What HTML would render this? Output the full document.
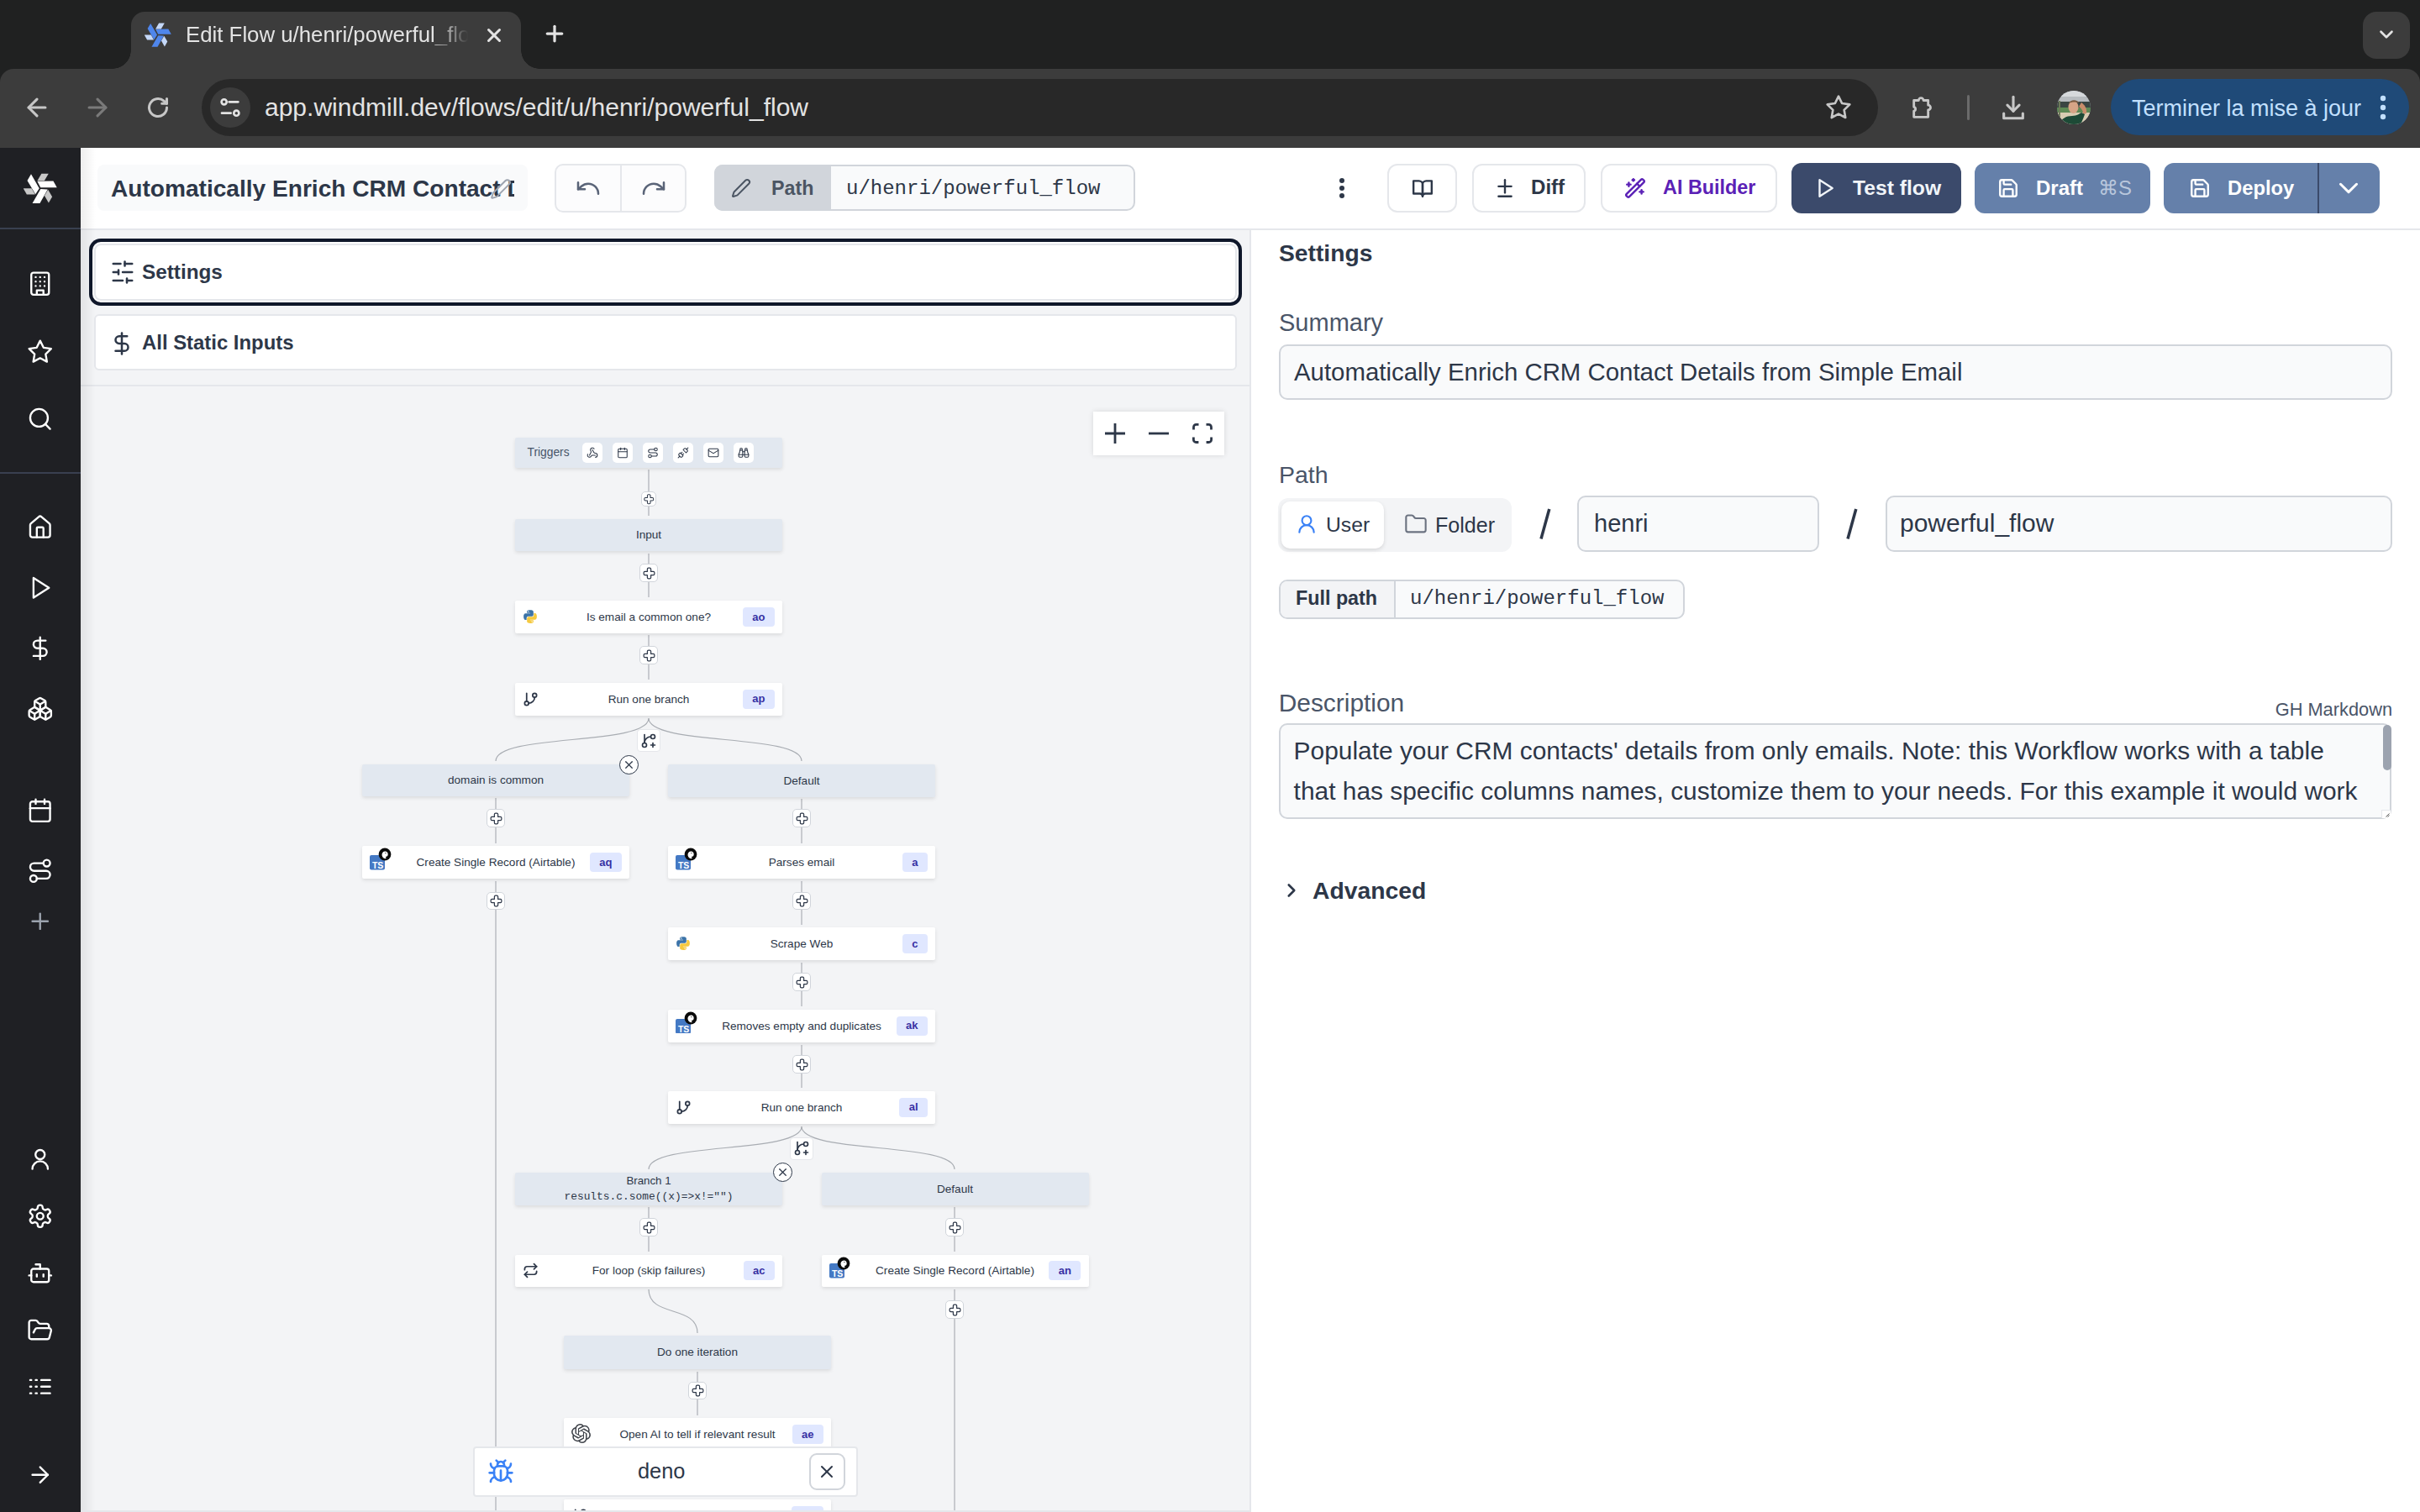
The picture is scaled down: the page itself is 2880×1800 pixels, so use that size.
<!DOCTYPE html><html><head><meta charset="utf-8"><style>html,body{margin:0;padding:0;width:2880px;height:1800px;overflow:hidden;background:#fff;position:relative}*{box-sizing:border-box}</style></head><body>
<div style="position:absolute;left:0px;top:0px;width:2880px;height:100px;background:#202121"></div>
<div style="position:absolute;left:156px;top:14px;width:464px;height:70px;background:#3c3c3c;border-radius:16px 16px 0 0"></div>
<div style="position:absolute;left:134px;top:60px;width:22px;height:22px;background:radial-gradient(circle at 0 0,#202121 21.5px,#3c3c3c 22px)"></div>
<div style="position:absolute;left:620px;top:60px;width:22px;height:22px;background:radial-gradient(circle at 100% 0,#202121 21.5px,#3c3c3c 22px)"></div>
<div style="position:absolute;left:0px;top:82px;width:2880px;height:94px;background:#3c3c3c;border-radius:16px 16px 0 0"></div>
<div style="position:absolute;left:156px;top:78px;width:464px;height:8px;background:#3c3c3c"></div>
<svg style="position:absolute;left:172px;top:27.3px;" width="32" height="29" viewBox="380 330 880 800"><g transform="rotate(0 815 730)"><polygon points="740,545 1160,540 1255,710 825,710" fill="#4f86ec"/><polygon points="850,345 1035,345 925,535 740,535" fill="#c5d8f8"/></g><g transform="rotate(120 815 730)"><polygon points="740,545 1160,540 1255,710 825,710" fill="#4f86ec"/><polygon points="850,345 1035,345 925,535 740,535" fill="#c5d8f8"/></g><g transform="rotate(240 815 730)"><polygon points="740,545 1160,540 1255,710 825,710" fill="#4f86ec"/><polygon points="850,345 1035,345 925,535 740,535" fill="#c5d8f8"/></g></svg>
<div style="position:absolute;left:221px;top:28.2px;width:336px;overflow:hidden;font-family:'Liberation Sans', sans-serif;font-size:25.8px;line-height:26px;color:#e3e3e3;white-space:nowrap;-webkit-mask-image:linear-gradient(90deg,#000 300px,transparent 336px)">Edit Flow u/henri/powerful_flow</div>
<svg style="position:absolute;left:575.0px;top:29.0px;" width="26" height="26" viewBox="0 0 24 24"><g fill="none" stroke="#e3e3e3" stroke-width="2.8" stroke-linecap="round" stroke-linejoin="round"><path d="M18 6 6 18"/><path d="m6 6 12 12"/></g></svg>
<svg style="position:absolute;left:645.0px;top:25.0px;" width="30" height="30" viewBox="0 0 24 24"><g fill="none" stroke="#e3e3e3" stroke-width="2.6" stroke-linecap="round" stroke-linejoin="round"><path d="M5 12h14"/><path d="M12 5v14"/></g></svg>
<div style="position:absolute;left:2812px;top:14px;width:56px;height:56px;background:#3c3c3c;border-radius:16px"></div>
<svg style="position:absolute;left:2827.0px;top:28.0px;" width="26" height="26" viewBox="0 0 24 24"><g fill="none" stroke="#e3e3e3" stroke-width="2.4" stroke-linecap="round" stroke-linejoin="round"><path d="m6 9 6 6 6-6"/></g></svg>
<svg style="position:absolute;left:27.0px;top:111.0px;" width="34" height="34" viewBox="0 0 24 24"><g fill="none" stroke="#c7c7c7" stroke-width="2.2" stroke-linecap="round" stroke-linejoin="round"><path d="M19 12H5"/><path d="m12 19-7-7 7-7"/></g></svg>
<svg style="position:absolute;left:99.0px;top:111.0px;" width="34" height="34" viewBox="0 0 24 24"><g fill="none" stroke="#7a7a7a" stroke-width="2.2" stroke-linecap="round" stroke-linejoin="round"><path d="M5 12h14"/><path d="m12 5 7 7-7 7"/></g></svg>
<svg style="position:absolute;left:174.0px;top:114.0px;" width="28" height="28" viewBox="0 0 24 24"><g fill="none" stroke="#c7c7c7" stroke-width="2.6" stroke-linecap="round" stroke-linejoin="round"><path d="M21 12a9 9 0 1 1-3-6.7L21 8"/><path d="M21 3v5h-5"/></g></svg>
<div style="position:absolute;left:240px;top:94px;width:1995px;height:68px;background:#282828;border-radius:34px"></div>
<div style="position:absolute;left:250px;top:104px;width:48px;height:48px;background:#3c3c3c;border-radius:24px"></div>
<svg style="position:absolute;left:258px;top:112px;" width="32" height="32" viewBox="0 0 24 24"><g fill="none" stroke="#e3e3e3" stroke-width="2" stroke-linecap="round"><circle cx="6.5" cy="7" r="2.3"/><path d="M11 7h8"/><circle cx="17.5" cy="17" r="2.3"/><path d="M4.5 17h8"/></g></svg>
<div style="position:absolute;left:315px;top:112.61px;font-family:'Liberation Sans', sans-serif;font-size:30px;line-height:30px;color:#e3e3e3;font-weight:400;white-space:nowrap;">app.windmill.dev/flows/edit/u/henri/powerful_flow</div>
<svg style="position:absolute;left:2172.0px;top:112.0px;" width="32" height="32" viewBox="0 0 24 24"><g fill="none" stroke="#c7c7c7" stroke-width="2" stroke-linecap="round" stroke-linejoin="round"><polygon points="12 2 15.09 8.26 22 9.27 17 14.14 18.18 21.02 12 17.77 5.82 21.02 7 14.14 2 9.27 8.91 8.26 12 2"/></g></svg>
<svg style="position:absolute;left:2272px;top:111px;" width="34" height="34" viewBox="0 0 24 24"><path fill="none" stroke="#c7c7c7" stroke-width="2" stroke-linejoin="round" d="M4 6h4a2 2 0 0 1 4 0h4v4a2 2 0 0 1 0 4v6H4v-5a1.8 1.8 0 0 0 0-3.5z"/></svg>
<div style="position:absolute;left:2341px;top:113px;width:3px;height:30px;background:#6b6b6b;border-radius:2px"></div>
<svg style="position:absolute;left:2379.0px;top:111.0px;" width="34" height="34" viewBox="0 0 24 24"><g fill="none" stroke="#c7c7c7" stroke-width="2.2" stroke-linecap="round" stroke-linejoin="round"><path d="M12 3v12"/><path d="m7 10 5 5 5-5"/><path d="M4 17v4h16v-4"/></g></svg>
<svg style="position:absolute;left:2448px;top:108px;" width="40" height="40" viewBox="0 0 40 40"><defs><clipPath id="av"><circle cx="20" cy="20" r="20"/></clipPath></defs><g clip-path="url(#av)"><rect width="40" height="40" fill="#b8bcc0"/><rect x="0" y="0" width="40" height="7" fill="#d6d9dc"/><rect x="0" y="13" width="40" height="13" fill="#3a4543"/><rect x="0" y="20" width="40" height="6" fill="#5e8a55"/><rect x="0" y="26" width="40" height="14" fill="#d8ccb2"/><rect x="2" y="12" width="2" height="20" fill="#6d7a5a"/><path d="M29 14 C33 17 36 21 35 27 L31 28 C31 23 29 21 26 19z" fill="#c98d6b"/><ellipse cx="19.5" cy="19.5" rx="6" ry="7.5" fill="#d7a486"/><path d="M14 15 C16 10 24 10 27 15 C24 13 17 13 14 15z" fill="#7a5a40"/><path d="M3 40 C5 33 11 30 18 30 C24 30 27 27 29 26 L33 28 C31 34 29 38 28 40z" fill="#1d4a36"/></g></svg>
<div style="position:absolute;left:2512px;top:94px;width:355px;height:67px;background:#1f4a78;border-radius:34px"></div>
<div style="position:absolute;left:2537px;top:115.94px;font-family:'Liberation Sans', sans-serif;font-size:27px;line-height:27px;color:#c2e0ff;font-weight:400;white-space:nowrap;">Terminer la mise à jour</div>
<svg style="position:absolute;left:2826px;top:110px;" width="20" height="36" viewBox="0 0 20 36"><g fill="#c2e0ff"><circle cx="10" cy="7" r="3.2"/><circle cx="10" cy="18" r="3.2"/><circle cx="10" cy="29" r="3.2"/></g></svg>
<div style="position:absolute;left:0px;top:176px;width:96px;height:1624px;background:#1f2024"></div>
<div style="position:absolute;left:0px;top:271px;width:96px;height:2px;background:#394050"></div>
<div style="position:absolute;left:0px;top:562px;width:96px;height:2px;background:#394050"></div>
<svg style="position:absolute;left:28px;top:205.8px;" width="40" height="36.3" viewBox="380 330 880 800"><g transform="rotate(0 815 730)"><polygon points="740,545 1160,540 1255,710 825,710" fill="#ffffff"/><polygon points="850,345 1035,345 925,535 740,535" fill="#c8c8c8"/></g><g transform="rotate(120 815 730)"><polygon points="740,545 1160,540 1255,710 825,710" fill="#ffffff"/><polygon points="850,345 1035,345 925,535 740,535" fill="#c8c8c8"/></g><g transform="rotate(240 815 730)"><polygon points="740,545 1160,540 1255,710 825,710" fill="#ffffff"/><polygon points="850,345 1035,345 925,535 740,535" fill="#c8c8c8"/></g></svg>
<svg style="position:absolute;left:32.25px;top:322.25px;" width="31.5" height="31.5" viewBox="0 0 24 24"><g fill="none" stroke="#fff" stroke-width="1.8" stroke-linecap="round" stroke-linejoin="round"><rect x="4" y="2" width="16" height="20" rx="2"/><path d="M9 22v-4h6v4"/><path d="M8 6h.01M16 6h.01M12 6h.01M12 10h.01M12 14h.01M16 10h.01M16 14h.01M8 10h.01M8 14h.01"/></g></svg>
<svg style="position:absolute;left:32.25px;top:402.75px;" width="31.5" height="31.5" viewBox="0 0 24 24"><g fill="none" stroke="#fff" stroke-width="1.8" stroke-linecap="round" stroke-linejoin="round"><polygon points="12 2 15.09 8.26 22 9.27 17 14.14 18.18 21.02 12 17.77 5.82 21.02 7 14.14 2 9.27 8.91 8.26 12 2"/></g></svg>
<svg style="position:absolute;left:32.25px;top:483.25px;" width="31.5" height="31.5" viewBox="0 0 24 24"><g fill="none" stroke="#fff" stroke-width="1.8" stroke-linecap="round" stroke-linejoin="round"><circle cx="11" cy="11" r="8"/><path d="m21 21-4.3-4.3"/></g></svg>
<svg style="position:absolute;left:32.25px;top:611.75px;" width="31.5" height="31.5" viewBox="0 0 24 24"><g fill="none" stroke="#fff" stroke-width="1.8" stroke-linecap="round" stroke-linejoin="round"><path d="M3 10a2 2 0 0 1 .7-1.5l7-6a2 2 0 0 1 2.6 0l7 6A2 2 0 0 1 21 10v9a2 2 0 0 1-2 2H5a2 2 0 0 1-2-2z"/><path d="M9 21v-8a1 1 0 0 1 1-1h4a1 1 0 0 1 1 1v8"/></g></svg>
<svg style="position:absolute;left:32.25px;top:684.25px;" width="31.5" height="31.5" viewBox="0 0 24 24"><g fill="none" stroke="#fff" stroke-width="1.8" stroke-linecap="round" stroke-linejoin="round"><polygon points="6 3 20 12 6 21 6 3"/></g></svg>
<svg style="position:absolute;left:32.25px;top:756.25px;" width="31.5" height="31.5" viewBox="0 0 24 24"><g fill="none" stroke="#fff" stroke-width="1.8" stroke-linecap="round" stroke-linejoin="round"><path d="M12 2v20"/><path d="M17 5H9.5a3.5 3.5 0 0 0 0 7h5a3.5 3.5 0 0 1 0 7H6"/></g></svg>
<svg style="position:absolute;left:32.25px;top:828.25px;" width="31.5" height="31.5" viewBox="0 0 24 24"><g fill="none" stroke="#fff" stroke-width="1.8" stroke-linecap="round" stroke-linejoin="round"><path d="M2.97 12.92A2 2 0 0 0 2 14.63v3.24a2 2 0 0 0 .97 1.71l3 1.8a2 2 0 0 0 2.06 0L12 19v-5.5l-5-3-4.03 2.42Z"/><path d="m7 16.5-4.74-2.85"/><path d="m7 16.5 5-3"/><path d="M7 16.5v5.17"/><path d="M12 13.5V19l3.97 2.38a2 2 0 0 0 2.06 0l3-1.8a2 2 0 0 0 .97-1.71v-3.24a2 2 0 0 0-.97-1.71L17 10.5l-5 3Z"/><path d="m17 16.5-5-3"/><path d="m17 16.5 4.74-2.85"/><path d="M17 16.5v5.17"/><path d="M7.97 4.42A2 2 0 0 0 7 6.13v4.37l5 3 5-3V6.13a2 2 0 0 0-.97-1.71l-3-1.8a2 2 0 0 0-2.06 0l-3 1.8Z"/><path d="M12 8 7.26 5.15"/><path d="m12 8 4.74-2.85"/><path d="M12 13.5V8"/></g></svg>
<svg style="position:absolute;left:32.25px;top:949.25px;" width="31.5" height="31.5" viewBox="0 0 24 24"><g fill="none" stroke="#fff" stroke-width="1.8" stroke-linecap="round" stroke-linejoin="round"><path d="M8 2v4"/><path d="M16 2v4"/><rect width="18" height="18" x="3" y="4" rx="2"/><path d="M3 10h18"/></g></svg>
<svg style="position:absolute;left:32.25px;top:1020.75px;" width="31.5" height="31.5" viewBox="0 0 24 24"><g fill="none" stroke="#fff" stroke-width="1.8" stroke-linecap="round" stroke-linejoin="round"><circle cx="6" cy="19" r="3"/><path d="M9 19h8.5a3.5 3.5 0 0 0 0-7h-11a3.5 3.5 0 0 1 0-7H15"/><circle cx="18" cy="5" r="3"/></g></svg>
<svg style="position:absolute;left:32.25px;top:1081.25px;" width="31.5" height="31.5" viewBox="0 0 24 24"><g fill="none" stroke="#9ca3af" stroke-width="1.8" stroke-linecap="round" stroke-linejoin="round"><path d="M5 12h14"/><path d="M12 5v14"/></g></svg>
<svg style="position:absolute;left:32.25px;top:1364.25px;" width="31.5" height="31.5" viewBox="0 0 24 24"><g fill="none" stroke="#fff" stroke-width="1.8" stroke-linecap="round" stroke-linejoin="round"><circle cx="12" cy="8" r="4.2"/><path d="M19 21a7 7 0 0 0-14 0"/></g></svg>
<svg style="position:absolute;left:32.25px;top:1432.25px;" width="31.5" height="31.5" viewBox="0 0 24 24"><g fill="none" stroke="#fff" stroke-width="1.8" stroke-linecap="round" stroke-linejoin="round"><path d="M12.22 2h-.44a2 2 0 0 0-2 2v.18a2 2 0 0 1-1 1.73l-.43.25a2 2 0 0 1-2 0l-.15-.08a2 2 0 0 0-2.73.73l-.22.38a2 2 0 0 0 .73 2.73l.15.1a2 2 0 0 1 1 1.72v.51a2 2 0 0 1-1 1.74l-.15.09a2 2 0 0 0-.73 2.73l.22.38a2 2 0 0 0 2.73.73l.15-.08a2 2 0 0 1 2 0l.43.25a2 2 0 0 1 1 1.73V20a2 2 0 0 0 2 2h.44a2 2 0 0 0 2-2v-.18a2 2 0 0 1 1-1.73l.43-.25a2 2 0 0 1 2 0l.15.08a2 2 0 0 0 2.73-.73l.22-.39a2 2 0 0 0-.73-2.73l-.15-.08a2 2 0 0 1-1-1.74v-.5a2 2 0 0 1 1-1.74l.15-.09a2 2 0 0 0 .73-2.73l-.22-.38a2 2 0 0 0-2.73-.73l-.15.08a2 2 0 0 1-2 0l-.43-.25a2 2 0 0 1-1-1.73V4a2 2 0 0 0-2-2z"/><circle cx="12" cy="12" r="3"/></g></svg>
<svg style="position:absolute;left:32.25px;top:1500.25px;" width="31.5" height="31.5" viewBox="0 0 24 24"><g fill="none" stroke="#fff" stroke-width="1.8" stroke-linecap="round" stroke-linejoin="round"><path d="M12 8V4H8"/><rect width="16" height="12" x="4" y="8" rx="2"/><path d="M2 14h2"/><path d="M20 14h2"/><path d="M15 13v2"/><path d="M9 13v2"/></g></svg>
<svg style="position:absolute;left:32.25px;top:1567.75px;" width="31.5" height="31.5" viewBox="0 0 24 24"><g fill="none" stroke="#fff" stroke-width="1.8" stroke-linecap="round" stroke-linejoin="round"><path d="m6 14 1.5-2.9A2 2 0 0 1 9.24 10H20a2 2 0 0 1 1.94 2.5l-1.54 6a2 2 0 0 1-1.95 1.5H4a2 2 0 0 1-2-2V5a2 2 0 0 1 2-2h3.9a2 2 0 0 1 1.69.9l.81 1.2a2 2 0 0 0 1.67.9H18a2 2 0 0 1 2 2v2"/></g></svg>
<svg style="position:absolute;left:32.25px;top:1635.25px;" width="31.5" height="31.5" viewBox="0 0 24 24"><g fill="none" stroke="#fff" stroke-width="1.8" stroke-linecap="round" stroke-linejoin="round"><path d="M13 12h8"/><path d="M13 18h8"/><path d="M13 6h8"/><path d="M3 12h1"/><path d="M3 18h1"/><path d="M3 6h1"/><path d="M8 12h1"/><path d="M8 18h1"/><path d="M8 6h1"/></g></svg>
<svg style="position:absolute;left:32.25px;top:1739.75px;" width="31.5" height="31.5" viewBox="0 0 24 24"><g fill="none" stroke="#fff" stroke-width="1.8" stroke-linecap="round" stroke-linejoin="round"><path d="M5 12h14"/><path d="m12 5 7 7-7 7"/></g></svg>
<div style="position:absolute;left:96px;top:176px;width:2784px;height:96px;background:#fff"></div>
<div style="position:absolute;left:96px;top:272px;width:2784px;height:2px;background:#e5e7eb"></div>
<div style="position:absolute;left:116px;top:196px;width:512px;height:55px;background:#f9fafb;border-radius:8px"></div>
<div style="position:absolute;left:132px;top:211.2px;width:480px;overflow:hidden;font-family:'Liberation Sans', sans-serif;font-size:28.1px;line-height:28.1px;color:#2d3748;font-weight:700;white-space:nowrap">Automatically Enrich CRM Contact Details from Simple Email</div>
<svg style="position:absolute;left:583.0px;top:212.0px;" width="26" height="26" viewBox="0 0 24 24"><g fill="none" stroke="#9ca3af" stroke-width="1.8" stroke-linecap="round" stroke-linejoin="round"><path d="M21.174 6.812a1 1 0 0 0-3.986-3.987L3.842 16.174a2 2 0 0 0-.5.83l-1.321 4.352a.5.5 0 0 0 .623.622l4.353-1.32a2 2 0 0 0 .83-.497z"/></g></svg>
<div style="position:absolute;left:660px;top:194.5px;width:157px;height:58.5px;border:2px solid #e5e7eb;border-radius:10px;background:#fcfcfd"></div>
<div style="position:absolute;left:738px;top:196px;width:2px;height:55px;background:#e5e7eb"></div>
<svg style="position:absolute;left:684.0px;top:208.0px;" width="32" height="32" viewBox="0 0 24 24"><g fill="none" stroke="#5a6478" stroke-width="1.9" stroke-linecap="round" stroke-linejoin="round"><path d="M3 7v6h6"/><path d="M21 17a9 9 0 0 0-9-9 9 9 0 0 0-6 2.3L3 13"/></g></svg>
<svg style="position:absolute;left:762.3px;top:208.0px;" width="32" height="32" viewBox="0 0 24 24"><g fill="none" stroke="#5a6478" stroke-width="1.9" stroke-linecap="round" stroke-linejoin="round"><path d="M21 7v6h-6"/><path d="M3 17a9 9 0 0 1 9-9 9 9 0 0 1 6 2.3l3 2.7"/></g></svg>
<div style="position:absolute;left:850px;top:196px;width:501px;height:55px;border:2px solid #d1d5db;border-radius:10px;background:#f9fafb"></div>
<div style="position:absolute;left:850px;top:196px;width:139px;height:55px;background:#d1d5db;border-radius:10px 0 0 10px"></div>
<svg style="position:absolute;left:870.0px;top:212.0px;" width="24" height="24" viewBox="0 0 24 24"><g fill="none" stroke="#4b5563" stroke-width="2" stroke-linecap="round" stroke-linejoin="round"><path d="M21.174 6.812a1 1 0 0 0-3.986-3.987L3.842 16.174a2 2 0 0 0-.5.83l-1.321 4.352a.5.5 0 0 0 .623.622l4.353-1.32a2 2 0 0 0 .83-.497z"/></g></svg>
<div style="position:absolute;left:918px;top:213.28px;font-family:'Liberation Sans', sans-serif;font-size:23.3px;line-height:23.3px;color:#4b5563;font-weight:700;white-space:nowrap;">Path</div>
<div style="position:absolute;left:1007px;top:213.18px;font-family:'Liberation Mono', monospace;font-size:24px;line-height:24px;color:#2d3748;font-weight:400;white-space:nowrap;">u/henri/powerful_flow</div>
<svg style="position:absolute;left:1587px;top:206px;" width="20" height="36" viewBox="0 0 20 36"><g fill="#2d3748"><circle cx="10" cy="9" r="3"/><circle cx="10" cy="18" r="3"/><circle cx="10" cy="27" r="3"/></g></svg>
<div style="position:absolute;left:1651px;top:194.5px;width:83px;height:58.5px;border:2px solid #e5e7eb;border-radius:12px;background:#fff"></div>
<svg style="position:absolute;left:1679.5px;top:211.0px;" width="26" height="26" viewBox="0 0 24 24"><g fill="none" stroke="#2d3748" stroke-width="2.2" stroke-linecap="round" stroke-linejoin="round"><path d="M2 4h6a4 4 0 0 1 4 4v13a3 3 0 0 0-3-3H2z"/><path d="M22 4h-6a4 4 0 0 0-4 4v13a3 3 0 0 1 3-3h7z"/></g></svg>
<div style="position:absolute;left:1752px;top:194.5px;width:135px;height:58.5px;border:2px solid #e5e7eb;border-radius:12px;background:#fff"></div>
<svg style="position:absolute;left:1778.0px;top:211.0px;" width="26" height="26" viewBox="0 0 24 24"><g fill="none" stroke="#2d3748" stroke-width="2.2" stroke-linecap="round" stroke-linejoin="round"><path d="M12 3v14"/><path d="M5 10h14"/><path d="M5 21h14"/></g></svg>
<div style="position:absolute;left:1822px;top:211.10px;font-family:'Liberation Sans', sans-serif;font-size:24.1px;line-height:24.1px;color:#2d3748;font-weight:700;white-space:nowrap;">Diff</div>
<div style="position:absolute;left:1905px;top:194.5px;width:210px;height:58.5px;border:2px solid #e5e7eb;border-radius:12px;background:#fff"></div>
<svg style="position:absolute;left:1933.0px;top:211.0px;" width="26" height="26" viewBox="0 0 24 24"><g fill="none" stroke="#5b21b6" stroke-width="2.2" stroke-linecap="round" stroke-linejoin="round"><path d="m21.64 3.64-1.28-1.28a1.21 1.21 0 0 0-1.72 0L2.36 18.64a1.21 1.21 0 0 0 0 1.72l1.28 1.28a1.2 1.2 0 0 0 1.72 0L21.64 5.36a1.2 1.2 0 0 0 0-1.72"/><path d="m14 7 3 3"/><path d="M5 6v4"/><path d="M19 14v4"/><path d="M10 2v2"/><path d="M7 8H3"/><path d="M21 16h-4"/><path d="M11 3H9"/></g></svg>
<div style="position:absolute;left:1979px;top:211.69px;font-family:'Liberation Sans', sans-serif;font-size:23.4px;line-height:23.4px;color:#5b21b6;font-weight:700;white-space:nowrap;">AI Builder</div>
<div style="position:absolute;left:2132px;top:194px;width:201.5px;height:59.5px;background:#3b4a6b;border-radius:12px"></div>
<svg style="position:absolute;left:2159.0px;top:211.0px;" width="26" height="26" viewBox="0 0 24 24"><g fill="none" stroke="#f1f5f9" stroke-width="2.2" stroke-linecap="round" stroke-linejoin="round"><polygon points="6 3 20 12 6 21 6 3"/></g></svg>
<div style="position:absolute;left:2205px;top:211.59px;font-family:'Liberation Sans', sans-serif;font-size:24.7px;line-height:24.7px;color:#f1f5f9;font-weight:700;white-space:nowrap;">Test flow</div>
<div style="position:absolute;left:2350px;top:194px;width:209px;height:59.5px;background:#6580aa;border-radius:12px"></div>
<svg style="position:absolute;left:2377.0px;top:211.0px;" width="26" height="26" viewBox="0 0 24 24"><g fill="none" stroke="#ffffff" stroke-width="2.2" stroke-linecap="round" stroke-linejoin="round"><path d="M15.2 3a2 2 0 0 1 1.4.6l3.8 3.8a2 2 0 0 1 .6 1.4V19a2 2 0 0 1-2 2H5a2 2 0 0 1-2-2V5a2 2 0 0 1 2-2z"/><path d="M17 21v-7a1 1 0 0 0-1-1H8a1 1 0 0 0-1 1v7"/><path d="M7 3v4a1 1 0 0 0 1 1h7"/></g></svg>
<div style="position:absolute;left:2423px;top:212.18px;font-family:'Liberation Sans', sans-serif;font-size:24px;line-height:24px;color:#ffffff;font-weight:700;white-space:nowrap;">Draft</div>
<div style="position:absolute;left:2497px;top:212.18px;font-family:'Liberation Sans', sans-serif;font-size:24px;line-height:24px;color:#b9c7dc;font-weight:400;white-space:nowrap;">⌘S</div>
<div style="position:absolute;left:2575px;top:194px;width:257px;height:59.5px;background:#6580aa;border-radius:12px"></div>
<div style="position:absolute;left:2758px;top:194px;width:2px;height:59.5px;background:#3b4a6b"></div>
<svg style="position:absolute;left:2605.0px;top:211.0px;" width="26" height="26" viewBox="0 0 24 24"><g fill="none" stroke="#ffffff" stroke-width="2.2" stroke-linecap="round" stroke-linejoin="round"><path d="M15.2 3a2 2 0 0 1 1.4.6l3.8 3.8a2 2 0 0 1 .6 1.4V19a2 2 0 0 1-2 2H5a2 2 0 0 1-2-2V5a2 2 0 0 1 2-2z"/><path d="M17 21v-7a1 1 0 0 0-1-1H8a1 1 0 0 0-1 1v7"/><path d="M7 3v4a1 1 0 0 0 1 1h7"/></g></svg>
<div style="position:absolute;left:2651px;top:212.35px;font-family:'Liberation Sans', sans-serif;font-size:23.8px;line-height:23.8px;color:#ffffff;font-weight:700;white-space:nowrap;">Deploy</div>
<svg style="position:absolute;left:2776.0px;top:205.0px;" width="38" height="38" viewBox="0 0 24 24"><g fill="none" stroke="#ffffff" stroke-width="1.9" stroke-linecap="round" stroke-linejoin="round"><path d="m6 9 6 6 6-6"/></g></svg>
<div style="position:absolute;left:96px;top:274px;width:1391px;height:1526px;background:#f3f4f6"></div>
<div style="position:absolute;left:1487px;top:274px;width:2px;height:1526px;background:#e5e7eb"></div>
<div style="position:absolute;left:112px;top:290px;width:1360px;height:68px;background:#fff;border:2px solid #e5e7eb;border-radius:8px;box-shadow:0 0 0 2px #fff,0 0 0 6px #0f172a"></div>
<svg style="position:absolute;left:130.5px;top:309.0px;" width="30" height="30" viewBox="0 0 24 24"><g fill="none" stroke="#2d3748" stroke-width="2" stroke-linecap="round" stroke-linejoin="round"><path d="M21 4h-7"/><path d="M10 4H3"/><path d="M21 12h-9"/><path d="M8 12H3"/><path d="M21 20h-5"/><path d="M12 20H3"/><path d="M14 2v4"/><path d="M8 10v4"/><path d="M16 18v4"/></g></svg>
<div style="position:absolute;left:169px;top:311.93px;font-family:'Liberation Sans', sans-serif;font-size:24.3px;line-height:24.3px;color:#2d3748;font-weight:700;white-space:nowrap;">Settings</div>
<div style="position:absolute;left:112px;top:373.5px;width:1360px;height:67.5px;background:#fff;border:2px solid #e5e7eb;border-radius:6px"></div>
<svg style="position:absolute;left:130.0px;top:393.5px;" width="30" height="30" viewBox="0 0 24 24"><g fill="none" stroke="#2d3748" stroke-width="2" stroke-linecap="round" stroke-linejoin="round"><path d="M12 2v20"/><path d="M17 5H9.5a3.5 3.5 0 0 0 0 7h5a3.5 3.5 0 0 1 0 7H6"/></g></svg>
<div style="position:absolute;left:169px;top:396.17px;font-family:'Liberation Sans', sans-serif;font-size:23.9px;line-height:23.9px;color:#2d3748;font-weight:700;white-space:nowrap;">All Static Inputs</div>
<div style="position:absolute;left:96px;top:457.5px;width:1391px;height:2px;background:#e5e7eb"></div>
<div style="position:absolute;left:96px;top:176px;width:18px;height:1624px;background:linear-gradient(90deg,rgba(0,0,0,0.07),rgba(0,0,0,0))"></div>
<div style="position:absolute;left:96px;top:459px;width:1391px;height:1341px;overflow:hidden">
<svg style="position:absolute;left:0;top:0" width="1391" height="1341"><path d="M676 100V155 M676 200V252 M676 297V350 M494 491V545 M494 590V1341 M858 492V545 M858 590V642 M858 687V739 M858 785V836 M676 978V1031 M1040 978V1031 M1040 1076V1341 M734 1174V1226" fill="none" stroke="#c8cacf" stroke-width="2"/><path d="M676 396C676 429.15 494 413.85 494 447 M676 396C676 429.15 858 413.85 858 447 M858 882C858 915.15 676 899.85 676 933 M858 882C858 915.15 1040 899.85 1040 933 M676 1076C676 1109.8 734 1094.2 734 1128" fill="none" stroke="#a9adb3" stroke-width="1.2"/></svg>
<div style="position:absolute;left:517px;top:62px;width:318px;height:36px;background:#e2e8f0;border-radius:2px;box-shadow:0 2px 4px rgba(0,0,0,0.10)"></div>
<div style="position:absolute;left:531.5px;top:73.32px;font-family:'Liberation Sans', sans-serif;font-size:13.8px;line-height:13.8px;color:#475569;font-weight:400;white-space:nowrap;">Triggers</div>
<div style="position:absolute;left:597px;top:68px;width:24px;height:24px;background:#fff;border-radius:5px"></div>
<svg style="position:absolute;left:602.0px;top:73.0px;" width="14" height="14" viewBox="0 0 24 24"><g fill="none" stroke="#2d3748" stroke-width="1.8" stroke-linecap="round" stroke-linejoin="round"><path d="M18 16.98h-5.99c-1.1 0-1.95.94-2.48 1.9A4 4 0 0 1 2 17c.01-.7.2-1.4.57-2"/><path d="m6 17 3.13-5.78c.53-.97.1-2.18-.5-3.1a4 4 0 1 1 6.89-4.06"/><path d="m12 6 3.13 5.73C15.66 12.7 16.9 13 18 13a4 4 0 0 1 0 8"/></g></svg>
<div style="position:absolute;left:633px;top:68px;width:24px;height:24px;background:#fff;border-radius:5px"></div>
<svg style="position:absolute;left:638.0px;top:73.0px;" width="14" height="14" viewBox="0 0 24 24"><g fill="none" stroke="#2d3748" stroke-width="1.8" stroke-linecap="round" stroke-linejoin="round"><path d="M8 2v4"/><path d="M16 2v4"/><rect width="18" height="18" x="3" y="4" rx="2"/><path d="M3 10h18"/></g></svg>
<div style="position:absolute;left:669px;top:68px;width:24px;height:24px;background:#fff;border-radius:5px"></div>
<svg style="position:absolute;left:674.0px;top:73.0px;" width="14" height="14" viewBox="0 0 24 24"><g fill="none" stroke="#2d3748" stroke-width="1.8" stroke-linecap="round" stroke-linejoin="round"><circle cx="6" cy="19" r="3"/><path d="M9 19h8.5a3.5 3.5 0 0 0 0-7h-11a3.5 3.5 0 0 1 0-7H15"/><circle cx="18" cy="5" r="3"/></g></svg>
<div style="position:absolute;left:705px;top:68px;width:24px;height:24px;background:#fff;border-radius:5px"></div>
<svg style="position:absolute;left:710.0px;top:73.0px;" width="14" height="14" viewBox="0 0 24 24"><g fill="none" stroke="#2d3748" stroke-width="1.8" stroke-linecap="round" stroke-linejoin="round"><path d="m19 5 3-3"/><path d="m2 22 3-3"/><path d="M6.3 20.3a2.4 2.4 0 0 0 3.4 0L12 18l-6-6-2.3 2.3a2.4 2.4 0 0 0 0 3.4Z"/><path d="M7.5 13.5 10 11"/><path d="M10.5 16.5 13 14"/><path d="m12 6 6 6 2.3-2.3a2.4 2.4 0 0 0 0-3.4l-2.6-2.6a2.4 2.4 0 0 0-3.4 0Z"/></g></svg>
<div style="position:absolute;left:741px;top:68px;width:24px;height:24px;background:#fff;border-radius:5px"></div>
<svg style="position:absolute;left:746.0px;top:73.0px;" width="14" height="14" viewBox="0 0 24 24"><g fill="none" stroke="#2d3748" stroke-width="1.8" stroke-linecap="round" stroke-linejoin="round"><rect width="20" height="16" x="2" y="4" rx="2"/><path d="m22 7-8.97 5.7a1.94 1.94 0 0 1-2.06 0L2 7"/></g></svg>
<div style="position:absolute;left:777px;top:68px;width:24px;height:24px;background:#fff;border-radius:5px"></div>
<svg style="position:absolute;left:782.0px;top:73.0px;" width="14" height="14" viewBox="0 0 24 24"><g fill="none" stroke="#2d3748" stroke-width="1.8" stroke-linecap="round" stroke-linejoin="round"><path d="M10 10h4"/><path d="M19 7V4a1 1 0 0 0-1-1h-2a1 1 0 0 0-1 1v3"/><path d="M20 21a2 2 0 0 0 2-2v-3.851c0-1.39-2-2.962-2-4.829V8a1 1 0 0 0-1-1h-4a1 1 0 0 0-1 1v11a2 2 0 0 0 2 2z"/><path d="M 22 16 L 2 16"/><path d="M4 21a2 2 0 0 1-2-2v-3.851c0-1.39 2-2.962 2-4.829V8a1 1 0 0 1 1-1h4a1 1 0 0 1 1 1v11a2 2 0 0 1-2 2z"/><path d="M9 7V4a1 1 0 0 0-1-1H6a1 1 0 0 0-1 1v3"/></g></svg>
<div style="position:absolute;left:517px;top:159px;width:318px;height:38px;background:#e2e8f0;border-radius:2px;box-shadow:0 2px 4px rgba(0,0,0,0.10)"></div>
<div style="position:absolute;left:176.0px;width:1000px;text-align:center;top:171.49px;font-family:'Liberation Sans', sans-serif;font-size:13.6px;line-height:13.6px;color:#2d3748;font-weight:400;white-space:nowrap;">Input</div>
<div style="position:absolute;left:517px;top:256px;width:318px;height:39px;background:#ffffff;border-radius:2px;box-shadow:0 2px 4px rgba(0,0,0,0.10)"></div>
<div style="position:absolute;left:176.0px;width:1000px;text-align:center;top:268.99px;font-family:'Liberation Sans', sans-serif;font-size:13.6px;line-height:13.6px;color:#2d3748;font-weight:400;white-space:nowrap;">Is email a common one?</div>
<div style="position:absolute;left:787.8296875px;top:264.0px;width:38.1703125px;height:23px;background:#e0e7ff;border-radius:4px"></div>
<div style="position:absolute;left:306.91484374999993px;width:1000px;text-align:center;top:268.50px;font-family:'Liberation Sans', sans-serif;font-size:13px;line-height:13px;color:#3730a3;font-weight:700;white-space:nowrap;">ao</div>
<svg style="position:absolute;left:525.5px;top:265.5px;" width="18" height="18" viewBox="0 0 32 32"><path fill="#3b73a8" d="M15.9 2c-7.2 0-6.7 3.1-6.7 3.1v3.2h6.8v1H6.5S2 8.8 2 16c0 7.2 4 6.9 4 6.9h2.3v-3.3s-.1-4 4-4h6.7s3.8.1 3.8-3.7V5.6S23.4 2 15.9 2zm-3.7 2.1a1.2 1.2 0 1 1 0 2.4 1.2 1.2 0 0 1 0-2.4z"/><path fill="#f5c93f" d="M16.1 30c7.2 0 6.7-3.1 6.7-3.1v-3.2H16v-1h9.5s4.5.5 4.5-6.7c0-7.2-4-6.9-4-6.9h-2.3v3.3s.1 4-4 4H13s-3.8-.1-3.8 3.7v6.3S8.6 30 16.1 30zm3.7-2.1a1.2 1.2 0 1 1 0-2.4 1.2 1.2 0 0 1 0 2.4z"/></svg>
<div style="position:absolute;left:517px;top:353.5px;width:318px;height:39.5px;background:#ffffff;border-radius:2px;box-shadow:0 2px 4px rgba(0,0,0,0.10)"></div>
<div style="position:absolute;left:176.0px;width:1000px;text-align:center;top:366.74px;font-family:'Liberation Sans', sans-serif;font-size:13.6px;line-height:13.6px;color:#2d3748;font-weight:400;white-space:nowrap;">Run one branch</div>
<div style="position:absolute;left:787.8296875px;top:361.75px;width:38.1703125px;height:23px;background:#e0e7ff;border-radius:4px"></div>
<div style="position:absolute;left:306.91484374999993px;width:1000px;text-align:center;top:366.25px;font-family:'Liberation Sans', sans-serif;font-size:13px;line-height:13px;color:#3730a3;font-weight:700;white-space:nowrap;">ap</div>
<svg style="position:absolute;left:526.0px;top:363.75px;" width="19" height="19" viewBox="0 0 24 24"><g fill="none" stroke="#2d3748" stroke-width="2.2" stroke-linecap="round" stroke-linejoin="round"><line x1="6" x2="6" y1="3" y2="15"/><circle cx="18" cy="6" r="3"/><circle cx="6" cy="18" r="3"/><path d="M18 9a9 9 0 0 1-9 9"/></g></svg>
<div style="position:absolute;left:335px;top:451px;width:318px;height:38px;background:#e2e8f0;border-radius:2px;box-shadow:0 2px 4px rgba(0,0,0,0.10)"></div>
<div style="position:absolute;left:-6.0px;width:1000px;text-align:center;top:463.49px;font-family:'Liberation Sans', sans-serif;font-size:13.6px;line-height:13.6px;color:#2d3748;font-weight:400;white-space:nowrap;">domain is common</div>
<div style="position:absolute;left:699px;top:451px;width:318px;height:39px;background:#e2e8f0;border-radius:2px;box-shadow:0 2px 4px rgba(0,0,0,0.10)"></div>
<div style="position:absolute;left:358.0px;width:1000px;text-align:center;top:463.99px;font-family:'Liberation Sans', sans-serif;font-size:13.6px;line-height:13.6px;color:#2d3748;font-weight:400;white-space:nowrap;">Default</div>
<div style="position:absolute;left:335px;top:548px;width:318px;height:39px;background:#ffffff;border-radius:2px;box-shadow:0 2px 4px rgba(0,0,0,0.10)"></div>
<div style="position:absolute;left:-6.0px;width:1000px;text-align:center;top:560.99px;font-family:'Liberation Sans', sans-serif;font-size:13.6px;line-height:13.6px;color:#2d3748;font-weight:400;white-space:nowrap;">Create Single Record (Airtable)</div>
<div style="position:absolute;left:605.8296875px;top:556.0px;width:38.1703125px;height:23px;background:#e0e7ff;border-radius:4px"></div>
<div style="position:absolute;left:124.91484374999993px;width:1000px;text-align:center;top:560.50px;font-family:'Liberation Sans', sans-serif;font-size:13px;line-height:13px;color:#3730a3;font-weight:700;white-space:nowrap;">aq</div>
<svg style="position:absolute;left:344.0px;top:559.0px;" width="18" height="17.5" viewBox="0 0 18 17.5"><rect width="18" height="17.5" rx="2" fill="#4479c4"/><text x="9.6" y="15.6" font-family="Liberation Sans" font-weight="700" font-size="10.5" fill="#fff" text-anchor="middle">TS</text></svg>
<svg style="position:absolute;left:353.6px;top:550.4px;" width="16" height="16" viewBox="0 0 16 16"><circle cx="8" cy="8" r="7.4" fill="#0a0a0a"/><path d="M4.6 9.5c-.4-2.6 1.2-4.8 3.6-4.9 2.2-.1 3.6 1.6 3.5 3.6-.1 1.8-1.3 2.6-2.6 2.6l.4 2.4c-2.6-.1-4.5-1.4-4.9-3.7z" fill="#fff"/><circle cx="8.9" cy="6.6" r="0.6" fill="#0a0a0a"/></svg>
<div style="position:absolute;left:699px;top:548px;width:318px;height:39px;background:#ffffff;border-radius:2px;box-shadow:0 2px 4px rgba(0,0,0,0.10)"></div>
<div style="position:absolute;left:358.0px;width:1000px;text-align:center;top:560.99px;font-family:'Liberation Sans', sans-serif;font-size:13.6px;line-height:13.6px;color:#2d3748;font-weight:400;white-space:nowrap;">Parses email</div>
<div style="position:absolute;left:977.7703125px;top:556.0px;width:30.2296875px;height:23px;background:#e0e7ff;border-radius:4px"></div>
<div style="position:absolute;left:492.88515625000014px;width:1000px;text-align:center;top:560.50px;font-family:'Liberation Sans', sans-serif;font-size:13px;line-height:13px;color:#3730a3;font-weight:700;white-space:nowrap;">a</div>
<svg style="position:absolute;left:708.0px;top:559.0px;" width="18" height="17.5" viewBox="0 0 18 17.5"><rect width="18" height="17.5" rx="2" fill="#4479c4"/><text x="9.6" y="15.6" font-family="Liberation Sans" font-weight="700" font-size="10.5" fill="#fff" text-anchor="middle">TS</text></svg>
<svg style="position:absolute;left:717.6px;top:550.4px;" width="16" height="16" viewBox="0 0 16 16"><circle cx="8" cy="8" r="7.4" fill="#0a0a0a"/><path d="M4.6 9.5c-.4-2.6 1.2-4.8 3.6-4.9 2.2-.1 3.6 1.6 3.5 3.6-.1 1.8-1.3 2.6-2.6 2.6l.4 2.4c-2.6-.1-4.5-1.4-4.9-3.7z" fill="#fff"/><circle cx="8.9" cy="6.6" r="0.6" fill="#0a0a0a"/></svg>
<div style="position:absolute;left:699px;top:645px;width:318px;height:39px;background:#ffffff;border-radius:2px;box-shadow:0 2px 4px rgba(0,0,0,0.10)"></div>
<div style="position:absolute;left:358.0px;width:1000px;text-align:center;top:657.99px;font-family:'Liberation Sans', sans-serif;font-size:13.6px;line-height:13.6px;color:#2d3748;font-weight:400;white-space:nowrap;">Scrape Web</div>
<div style="position:absolute;left:977.7703125px;top:653.0px;width:30.2296875px;height:23px;background:#e0e7ff;border-radius:4px"></div>
<div style="position:absolute;left:492.88515625000014px;width:1000px;text-align:center;top:657.50px;font-family:'Liberation Sans', sans-serif;font-size:13px;line-height:13px;color:#3730a3;font-weight:700;white-space:nowrap;">c</div>
<svg style="position:absolute;left:707.5px;top:654.5px;" width="18" height="18" viewBox="0 0 32 32"><path fill="#3b73a8" d="M15.9 2c-7.2 0-6.7 3.1-6.7 3.1v3.2h6.8v1H6.5S2 8.8 2 16c0 7.2 4 6.9 4 6.9h2.3v-3.3s-.1-4 4-4h6.7s3.8.1 3.8-3.7V5.6S23.4 2 15.9 2zm-3.7 2.1a1.2 1.2 0 1 1 0 2.4 1.2 1.2 0 0 1 0-2.4z"/><path fill="#f5c93f" d="M16.1 30c7.2 0 6.7-3.1 6.7-3.1v-3.2H16v-1h9.5s4.5.5 4.5-6.7c0-7.2-4-6.9-4-6.9h-2.3v3.3s.1 4-4 4H13s-3.8-.1-3.8 3.7v6.3S8.6 30 16.1 30zm3.7-2.1a1.2 1.2 0 1 1 0-2.4 1.2 1.2 0 0 1 0 2.4z"/></svg>
<div style="position:absolute;left:699px;top:742.5px;width:318px;height:39.5px;background:#ffffff;border-radius:2px;box-shadow:0 2px 4px rgba(0,0,0,0.10)"></div>
<div style="position:absolute;left:358.0px;width:1000px;text-align:center;top:755.74px;font-family:'Liberation Sans', sans-serif;font-size:13.6px;line-height:13.6px;color:#2d3748;font-weight:400;white-space:nowrap;">Removes empty and duplicates</div>
<div style="position:absolute;left:970.5406250000001px;top:750.75px;width:37.459375px;height:23px;background:#e0e7ff;border-radius:4px"></div>
<div style="position:absolute;left:489.27031250000005px;width:1000px;text-align:center;top:755.25px;font-family:'Liberation Sans', sans-serif;font-size:13px;line-height:13px;color:#3730a3;font-weight:700;white-space:nowrap;">ak</div>
<svg style="position:absolute;left:708.0px;top:753.75px;" width="18" height="17.5" viewBox="0 0 18 17.5"><rect width="18" height="17.5" rx="2" fill="#4479c4"/><text x="9.6" y="15.6" font-family="Liberation Sans" font-weight="700" font-size="10.5" fill="#fff" text-anchor="middle">TS</text></svg>
<svg style="position:absolute;left:717.6px;top:745.15px;" width="16" height="16" viewBox="0 0 16 16"><circle cx="8" cy="8" r="7.4" fill="#0a0a0a"/><path d="M4.6 9.5c-.4-2.6 1.2-4.8 3.6-4.9 2.2-.1 3.6 1.6 3.5 3.6-.1 1.8-1.3 2.6-2.6 2.6l.4 2.4c-2.6-.1-4.5-1.4-4.9-3.7z" fill="#fff"/><circle cx="8.9" cy="6.6" r="0.6" fill="#0a0a0a"/></svg>
<div style="position:absolute;left:699px;top:839.5px;width:318px;height:39.5px;background:#ffffff;border-radius:2px;box-shadow:0 2px 4px rgba(0,0,0,0.10)"></div>
<div style="position:absolute;left:358.0px;width:1000px;text-align:center;top:852.74px;font-family:'Liberation Sans', sans-serif;font-size:13.6px;line-height:13.6px;color:#2d3748;font-weight:400;white-space:nowrap;">Run one branch</div>
<div style="position:absolute;left:974.1578125000001px;top:847.75px;width:33.8421875px;height:23px;background:#e0e7ff;border-radius:4px"></div>
<div style="position:absolute;left:491.07890625000005px;width:1000px;text-align:center;top:852.25px;font-family:'Liberation Sans', sans-serif;font-size:13px;line-height:13px;color:#3730a3;font-weight:700;white-space:nowrap;">al</div>
<svg style="position:absolute;left:708.0px;top:849.75px;" width="19" height="19" viewBox="0 0 24 24"><g fill="none" stroke="#2d3748" stroke-width="2.2" stroke-linecap="round" stroke-linejoin="round"><line x1="6" x2="6" y1="3" y2="15"/><circle cx="18" cy="6" r="3"/><circle cx="6" cy="18" r="3"/><path d="M18 9a9 9 0 0 1-9 9"/></g></svg>
<div style="position:absolute;left:517px;top:937px;width:318px;height:38.5px;background:#e2e8f0;border-radius:2px;box-shadow:0 2px 4px rgba(0,0,0,0.10)"></div>
<div style="position:absolute;left:176.0px;width:1000px;text-align:center;top:939.74px;font-family:'Liberation Sans', sans-serif;font-size:13.3px;line-height:13.3px;color:#2d3748;font-weight:400;white-space:nowrap;">Branch 1</div>
<div style="position:absolute;left:176.0px;width:1000px;text-align:center;top:959.58px;font-family:'Liberation Mono', monospace;font-size:12.9px;line-height:12.9px;color:#2d3748;font-weight:400;white-space:nowrap;">results.c.some((x)=&gt;x!="")</div>
<div style="position:absolute;left:881.5px;top:937px;width:318px;height:38.5px;background:#e2e8f0;border-radius:2px;box-shadow:0 2px 4px rgba(0,0,0,0.10)"></div>
<div style="position:absolute;left:540.5px;width:1000px;text-align:center;top:949.74px;font-family:'Liberation Sans', sans-serif;font-size:13.6px;line-height:13.6px;color:#2d3748;font-weight:400;white-space:nowrap;">Default</div>
<div style="position:absolute;left:517px;top:1034.5px;width:318px;height:38.5px;background:#ffffff;border-radius:2px;box-shadow:0 2px 4px rgba(0,0,0,0.10)"></div>
<div style="position:absolute;left:176.0px;width:1000px;text-align:center;top:1047.24px;font-family:'Liberation Sans', sans-serif;font-size:13.6px;line-height:13.6px;color:#2d3748;font-weight:400;white-space:nowrap;">For loop (skip failures)</div>
<div style="position:absolute;left:788.540625px;top:1042.25px;width:37.459375px;height:23px;background:#e0e7ff;border-radius:4px"></div>
<div style="position:absolute;left:307.27031249999993px;width:1000px;text-align:center;top:1046.75px;font-family:'Liberation Sans', sans-serif;font-size:13px;line-height:13px;color:#3730a3;font-weight:700;white-space:nowrap;">ac</div>
<svg style="position:absolute;left:526.0px;top:1044.25px;" width="19" height="19" viewBox="0 0 24 24"><g fill="none" stroke="#2d3748" stroke-width="2.2" stroke-linecap="round" stroke-linejoin="round"><path d="m17 2 4 4-4 4"/><path d="M3 11v-1a4 4 0 0 1 4-4h14"/><path d="m7 22-4-4 4-4"/><path d="M21 13v1a4 4 0 0 1-4 4H3"/></g></svg>
<div style="position:absolute;left:881.5px;top:1034.5px;width:318px;height:38.5px;background:#ffffff;border-radius:2px;box-shadow:0 2px 4px rgba(0,0,0,0.10)"></div>
<div style="position:absolute;left:540.5px;width:1000px;text-align:center;top:1047.24px;font-family:'Liberation Sans', sans-serif;font-size:13.6px;line-height:13.6px;color:#2d3748;font-weight:400;white-space:nowrap;">Create Single Record (Airtable)</div>
<div style="position:absolute;left:1152.3296875px;top:1042.25px;width:38.1703125px;height:23px;background:#e0e7ff;border-radius:4px"></div>
<div style="position:absolute;left:671.41484375px;width:1000px;text-align:center;top:1046.75px;font-family:'Liberation Sans', sans-serif;font-size:13px;line-height:13px;color:#3730a3;font-weight:700;white-space:nowrap;">an</div>
<svg style="position:absolute;left:890.5px;top:1045.25px;" width="18" height="17.5" viewBox="0 0 18 17.5"><rect width="18" height="17.5" rx="2" fill="#4479c4"/><text x="9.6" y="15.6" font-family="Liberation Sans" font-weight="700" font-size="10.5" fill="#fff" text-anchor="middle">TS</text></svg>
<svg style="position:absolute;left:900.1px;top:1036.65px;" width="16" height="16" viewBox="0 0 16 16"><circle cx="8" cy="8" r="7.4" fill="#0a0a0a"/><path d="M4.6 9.5c-.4-2.6 1.2-4.8 3.6-4.9 2.2-.1 3.6 1.6 3.5 3.6-.1 1.8-1.3 2.6-2.6 2.6l.4 2.4c-2.6-.1-4.5-1.4-4.9-3.7z" fill="#fff"/><circle cx="8.9" cy="6.6" r="0.6" fill="#0a0a0a"/></svg>
<div style="position:absolute;left:575px;top:1131px;width:318px;height:40px;background:#e2e8f0;border-radius:2px;box-shadow:0 2px 4px rgba(0,0,0,0.10)"></div>
<div style="position:absolute;left:234.0px;width:1000px;text-align:center;top:1144.49px;font-family:'Liberation Sans', sans-serif;font-size:13.6px;line-height:13.6px;color:#2d3748;font-weight:400;white-space:nowrap;">Do one iteration</div>
<div style="position:absolute;left:575px;top:1229px;width:318px;height:39px;background:#ffffff;border-radius:2px;box-shadow:0 2px 4px rgba(0,0,0,0.10)"></div>
<div style="position:absolute;left:234.0px;width:1000px;text-align:center;top:1241.99px;font-family:'Liberation Sans', sans-serif;font-size:13.6px;line-height:13.6px;color:#2d3748;font-weight:400;white-space:nowrap;">Open AI to tell if relevant result</div>
<div style="position:absolute;left:846.540625px;top:1237.0px;width:37.459375px;height:23px;background:#e0e7ff;border-radius:4px"></div>
<div style="position:absolute;left:365.27031249999993px;width:1000px;text-align:center;top:1241.50px;font-family:'Liberation Sans', sans-serif;font-size:13px;line-height:13px;color:#3730a3;font-weight:700;white-space:nowrap;">ae</div>
<svg style="position:absolute;left:584.4px;top:1235.9px;" width="23" height="23" viewBox="0 0 24 24"><path fill="#3f434a" d="M22.2819 9.8211a5.9847 5.9847 0 0 0-.5157-4.9108 6.0462 6.0462 0 0 0-6.5098-2.9A6.0651 6.0651 0 0 0 4.9807 4.1818a5.9847 5.9847 0 0 0-3.9977 2.9 6.0462 6.0462 0 0 0 .7427 7.0966 5.98 5.98 0 0 0 .511 4.9107 6.051 6.051 0 0 0 6.5146 2.9001A5.9847 5.9847 0 0 0 13.2599 24a6.0557 6.0557 0 0 0 5.7718-4.2058 5.9894 5.9894 0 0 0 3.9977-2.9001 6.0557 6.0557 0 0 0-.7475-7.0729zm-9.022 12.6081a4.4755 4.4755 0 0 1-2.8764-1.0408l.1419-.0804 4.7783-2.7582a.7948.7948 0 0 0 .3927-.6813v-6.7369l2.02 1.1686a.071.071 0 0 1 .038.052v5.5826a4.504 4.504 0 0 1-4.4945 4.4944zm-9.6607-4.1254a4.4708 4.4708 0 0 1-.5346-3.0137l.142.0852 4.783 2.7582a.7712.7712 0 0 0 .7806 0l5.8428-3.3685v2.3324a.0804.0804 0 0 1-.0332.0615L9.74 19.9502a4.4992 4.4992 0 0 1-6.1408-1.6464zM2.3408 7.8956a4.485 4.485 0 0 1 2.3655-1.9728V11.6a.7664.7664 0 0 0 .3879.6765l5.8144 3.3543-2.0201 1.1685a.0757.0757 0 0 1-.071 0l-4.8303-2.7865A4.504 4.504 0 0 1 2.3408 7.872zm16.5963 3.8558L13.1038 8.364 15.1192 7.2a.0757.0757 0 0 1 .071 0l4.8303 2.7913a4.4944 4.4944 0 0 1-.6765 8.1042v-5.6772a.79.79 0 0 0-.407-.667zm2.0107-3.0231l-.142-.0852-4.7735-2.7818a.7759.7759 0 0 0-.7854 0L9.409 9.2297V6.8974a.0662.0662 0 0 1 .0284-.0615l4.8303-2.7866a4.4992 4.4992 0 0 1 6.6802 4.66zM8.3065 12.863l-2.02-1.1638a.0804.0804 0 0 1-.038-.0567V6.0742a4.4992 4.4992 0 0 1 7.3757-3.4537l-.142.0805L8.704 5.459a.7948.7948 0 0 0-.3927.6813zm1.0976-2.3654l2.602-1.4998 2.6069 1.4998v2.9994l-2.5974 1.4997-2.6067-1.4997Z"/></svg>
<div style="position:absolute;left:575px;top:1326px;width:318px;height:39px;background:#ffffff;border-radius:2px;box-shadow:0 2px 4px rgba(0,0,0,0.10)"></div>
<div style="position:absolute;left:234.0px;width:1000px;text-align:center;top:1338.99px;font-family:'Liberation Sans', sans-serif;font-size:13.6px;line-height:13.6px;color:#2d3748;font-weight:400;white-space:nowrap;"></div>
<div style="position:absolute;left:845.8296875px;top:1334.0px;width:38.1703125px;height:23px;background:#e0e7ff;border-radius:4px"></div>
<div style="position:absolute;left:364.91484374999993px;width:1000px;text-align:center;top:1338.50px;font-family:'Liberation Sans', sans-serif;font-size:13px;line-height:13px;color:#3730a3;font-weight:700;white-space:nowrap;">ad</div>
<svg style="position:absolute;left:584.0px;top:1336.0px;" width="19" height="19" viewBox="0 0 24 24"><g fill="none" stroke="#2d3748" stroke-width="2.2" stroke-linecap="round" stroke-linejoin="round"><line x1="6" x2="6" y1="3" y2="15"/><circle cx="18" cy="6" r="3"/><circle cx="6" cy="18" r="3"/><path d="M18 9a9 9 0 0 1-9 9"/></g></svg>
<div style="position:absolute;left:667.0px;top:125.5px;width:18px;height:18px;background:#fff;border:1px solid #d1d5db;border-radius:5px"></div>
<svg style="position:absolute;left:669.15px;top:127.54999999999995px;" width="14.5" height="14.5" viewBox="0 0 24 24"><g fill="none" stroke="#2d3748" stroke-width="1.7" stroke-linecap="round" stroke-linejoin="round"><path d="M11 3h2a2 2 0 0 1 2 2v4h4a2 2 0 0 1 2 2v2a2 2 0 0 1-2 2h-4v4a2 2 0 0 1-2 2h-2a2 2 0 0 1-2-2v-4H5a2 2 0 0 1-2-2v-2a2 2 0 0 1 2-2h4V5a2 2 0 0 1 2-2z"/></g></svg>
<div style="position:absolute;left:665.25px;top:212.25px;width:21.5px;height:21.5px;background:#fff;border:1px solid #d1d5db;border-radius:5px"></div>
<svg style="position:absolute;left:667.9px;top:214.79999999999995px;" width="17" height="17" viewBox="0 0 24 24"><g fill="none" stroke="#2d3748" stroke-width="1.7" stroke-linecap="round" stroke-linejoin="round"><path d="M11 3h2a2 2 0 0 1 2 2v4h4a2 2 0 0 1 2 2v2a2 2 0 0 1-2 2h-4v4a2 2 0 0 1-2 2h-2a2 2 0 0 1-2-2v-4H5a2 2 0 0 1-2-2v-2a2 2 0 0 1 2-2h4V5a2 2 0 0 1 2-2z"/></g></svg>
<div style="position:absolute;left:665.25px;top:310.25px;width:21.5px;height:21.5px;background:#fff;border:1px solid #d1d5db;border-radius:5px"></div>
<svg style="position:absolute;left:667.9px;top:312.79999999999995px;" width="17" height="17" viewBox="0 0 24 24"><g fill="none" stroke="#2d3748" stroke-width="1.7" stroke-linecap="round" stroke-linejoin="round"><path d="M11 3h2a2 2 0 0 1 2 2v4h4a2 2 0 0 1 2 2v2a2 2 0 0 1-2 2h-4v4a2 2 0 0 1-2 2h-2a2 2 0 0 1-2-2v-4H5a2 2 0 0 1-2-2v-2a2 2 0 0 1 2-2h4V5a2 2 0 0 1 2-2z"/></g></svg>
<div style="position:absolute;left:483.25px;top:504.25px;width:21.5px;height:21.5px;background:#fff;border:1px solid #d1d5db;border-radius:5px"></div>
<svg style="position:absolute;left:485.9px;top:506.79999999999995px;" width="17" height="17" viewBox="0 0 24 24"><g fill="none" stroke="#2d3748" stroke-width="1.7" stroke-linecap="round" stroke-linejoin="round"><path d="M11 3h2a2 2 0 0 1 2 2v4h4a2 2 0 0 1 2 2v2a2 2 0 0 1-2 2h-4v4a2 2 0 0 1-2 2h-2a2 2 0 0 1-2-2v-4H5a2 2 0 0 1-2-2v-2a2 2 0 0 1 2-2h4V5a2 2 0 0 1 2-2z"/></g></svg>
<div style="position:absolute;left:847.25px;top:504.25px;width:21.5px;height:21.5px;background:#fff;border:1px solid #d1d5db;border-radius:5px"></div>
<svg style="position:absolute;left:849.9px;top:506.79999999999995px;" width="17" height="17" viewBox="0 0 24 24"><g fill="none" stroke="#2d3748" stroke-width="1.7" stroke-linecap="round" stroke-linejoin="round"><path d="M11 3h2a2 2 0 0 1 2 2v4h4a2 2 0 0 1 2 2v2a2 2 0 0 1-2 2h-4v4a2 2 0 0 1-2 2h-2a2 2 0 0 1-2-2v-4H5a2 2 0 0 1-2-2v-2a2 2 0 0 1 2-2h4V5a2 2 0 0 1 2-2z"/></g></svg>
<div style="position:absolute;left:483.25px;top:602.75px;width:21.5px;height:21.5px;background:#fff;border:1px solid #d1d5db;border-radius:5px"></div>
<svg style="position:absolute;left:485.9px;top:605.3px;" width="17" height="17" viewBox="0 0 24 24"><g fill="none" stroke="#2d3748" stroke-width="1.7" stroke-linecap="round" stroke-linejoin="round"><path d="M11 3h2a2 2 0 0 1 2 2v4h4a2 2 0 0 1 2 2v2a2 2 0 0 1-2 2h-4v4a2 2 0 0 1-2 2h-2a2 2 0 0 1-2-2v-4H5a2 2 0 0 1-2-2v-2a2 2 0 0 1 2-2h4V5a2 2 0 0 1 2-2z"/></g></svg>
<div style="position:absolute;left:847.25px;top:602.75px;width:21.5px;height:21.5px;background:#fff;border:1px solid #d1d5db;border-radius:5px"></div>
<svg style="position:absolute;left:849.9px;top:605.3px;" width="17" height="17" viewBox="0 0 24 24"><g fill="none" stroke="#2d3748" stroke-width="1.7" stroke-linecap="round" stroke-linejoin="round"><path d="M11 3h2a2 2 0 0 1 2 2v4h4a2 2 0 0 1 2 2v2a2 2 0 0 1-2 2h-4v4a2 2 0 0 1-2 2h-2a2 2 0 0 1-2-2v-4H5a2 2 0 0 1-2-2v-2a2 2 0 0 1 2-2h4V5a2 2 0 0 1 2-2z"/></g></svg>
<div style="position:absolute;left:847.25px;top:699.25px;width:21.5px;height:21.5px;background:#fff;border:1px solid #d1d5db;border-radius:5px"></div>
<svg style="position:absolute;left:849.9px;top:701.8px;" width="17" height="17" viewBox="0 0 24 24"><g fill="none" stroke="#2d3748" stroke-width="1.7" stroke-linecap="round" stroke-linejoin="round"><path d="M11 3h2a2 2 0 0 1 2 2v4h4a2 2 0 0 1 2 2v2a2 2 0 0 1-2 2h-4v4a2 2 0 0 1-2 2h-2a2 2 0 0 1-2-2v-4H5a2 2 0 0 1-2-2v-2a2 2 0 0 1 2-2h4V5a2 2 0 0 1 2-2z"/></g></svg>
<div style="position:absolute;left:847.25px;top:797.05px;width:21.5px;height:21.5px;background:#fff;border:1px solid #d1d5db;border-radius:5px"></div>
<svg style="position:absolute;left:849.9px;top:799.5999999999999px;" width="17" height="17" viewBox="0 0 24 24"><g fill="none" stroke="#2d3748" stroke-width="1.7" stroke-linecap="round" stroke-linejoin="round"><path d="M11 3h2a2 2 0 0 1 2 2v4h4a2 2 0 0 1 2 2v2a2 2 0 0 1-2 2h-4v4a2 2 0 0 1-2 2h-2a2 2 0 0 1-2-2v-4H5a2 2 0 0 1-2-2v-2a2 2 0 0 1 2-2h4V5a2 2 0 0 1 2-2z"/></g></svg>
<div style="position:absolute;left:665.25px;top:991.25px;width:21.5px;height:21.5px;background:#fff;border:1px solid #d1d5db;border-radius:5px"></div>
<svg style="position:absolute;left:667.9px;top:993.8px;" width="17" height="17" viewBox="0 0 24 24"><g fill="none" stroke="#2d3748" stroke-width="1.7" stroke-linecap="round" stroke-linejoin="round"><path d="M11 3h2a2 2 0 0 1 2 2v4h4a2 2 0 0 1 2 2v2a2 2 0 0 1-2 2h-4v4a2 2 0 0 1-2 2h-2a2 2 0 0 1-2-2v-4H5a2 2 0 0 1-2-2v-2a2 2 0 0 1 2-2h4V5a2 2 0 0 1 2-2z"/></g></svg>
<div style="position:absolute;left:1029.25px;top:991.25px;width:21.5px;height:21.5px;background:#fff;border:1px solid #d1d5db;border-radius:5px"></div>
<svg style="position:absolute;left:1031.9px;top:993.8px;" width="17" height="17" viewBox="0 0 24 24"><g fill="none" stroke="#2d3748" stroke-width="1.7" stroke-linecap="round" stroke-linejoin="round"><path d="M11 3h2a2 2 0 0 1 2 2v4h4a2 2 0 0 1 2 2v2a2 2 0 0 1-2 2h-4v4a2 2 0 0 1-2 2h-2a2 2 0 0 1-2-2v-4H5a2 2 0 0 1-2-2v-2a2 2 0 0 1 2-2h4V5a2 2 0 0 1 2-2z"/></g></svg>
<div style="position:absolute;left:1029.25px;top:1089.25px;width:21.5px;height:21.5px;background:#fff;border:1px solid #d1d5db;border-radius:5px"></div>
<svg style="position:absolute;left:1031.9px;top:1091.8px;" width="17" height="17" viewBox="0 0 24 24"><g fill="none" stroke="#2d3748" stroke-width="1.7" stroke-linecap="round" stroke-linejoin="round"><path d="M11 3h2a2 2 0 0 1 2 2v4h4a2 2 0 0 1 2 2v2a2 2 0 0 1-2 2h-4v4a2 2 0 0 1-2 2h-2a2 2 0 0 1-2-2v-4H5a2 2 0 0 1-2-2v-2a2 2 0 0 1 2-2h4V5a2 2 0 0 1 2-2z"/></g></svg>
<div style="position:absolute;left:723.25px;top:1185.85px;width:21.5px;height:21.5px;background:#fff;border:1px solid #d1d5db;border-radius:5px"></div>
<svg style="position:absolute;left:725.9px;top:1188.3999999999999px;" width="17" height="17" viewBox="0 0 24 24"><g fill="none" stroke="#2d3748" stroke-width="1.7" stroke-linecap="round" stroke-linejoin="round"><path d="M11 3h2a2 2 0 0 1 2 2v4h4a2 2 0 0 1 2 2v2a2 2 0 0 1-2 2h-4v4a2 2 0 0 1-2 2h-2a2 2 0 0 1-2-2v-4H5a2 2 0 0 1-2-2v-2a2 2 0 0 1 2-2h4V5a2 2 0 0 1 2-2z"/></g></svg>
<div style="position:absolute;left:662px;top:409.0px;width:28px;height:27px;background:#fff;border:1px solid #e5e7eb;border-radius:4px"></div>
<svg style="position:absolute;left:666.0px;top:412.5px;" width="20" height="20" viewBox="0 0 24 24"><g fill="none" stroke="#2d3748" stroke-width="2" stroke-linecap="round" stroke-linejoin="round"><path d="M6 3v12"/><path d="M18 9a3 3 0 1 0 0-6 3 3 0 0 0 0 6z"/><path d="M6 21a3 3 0 1 0 0-6 3 3 0 0 0 0 6z"/><path d="M15 6a9 9 0 0 0-9 9"/><path d="M18 15v6"/><path d="M21 18h-6"/></g></svg>
<div style="position:absolute;left:844px;top:894.5px;width:28px;height:27px;background:#fff;border:1px solid #e5e7eb;border-radius:4px"></div>
<svg style="position:absolute;left:848.0px;top:898.0px;" width="20" height="20" viewBox="0 0 24 24"><g fill="none" stroke="#2d3748" stroke-width="2" stroke-linecap="round" stroke-linejoin="round"><path d="M6 3v12"/><path d="M18 9a3 3 0 1 0 0-6 3 3 0 0 0 0 6z"/><path d="M6 21a3 3 0 1 0 0-6 3 3 0 0 0 0 6z"/><path d="M15 6a9 9 0 0 0-9 9"/><path d="M18 15v6"/><path d="M21 18h-6"/></g></svg>
<div style="position:absolute;left:641.1px;top:439.5px;width:23px;height:23px;background:#fff;border:1.7px solid #2d3748;border-radius:50%"></div>
<svg style="position:absolute;left:645.1px;top:443.5px;" width="15" height="15" viewBox="0 0 24 24"><g fill="none" stroke="#2d3748" stroke-width="2" stroke-linecap="round" stroke-linejoin="round"><path d="M18 6 6 18"/><path d="m6 6 12 12"/></g></svg>
<div style="position:absolute;left:823.5px;top:925.0px;width:23px;height:23px;background:#fff;border:1.7px solid #2d3748;border-radius:50%"></div>
<svg style="position:absolute;left:827.5px;top:929.0px;" width="15" height="15" viewBox="0 0 24 24"><g fill="none" stroke="#2d3748" stroke-width="2" stroke-linecap="round" stroke-linejoin="round"><path d="M18 6 6 18"/><path d="m6 6 12 12"/></g></svg>
<div style="position:absolute;left:1205px;top:31px;width:156px;height:52px;background:#fff;box-shadow:0 0 6px rgba(0,0,0,0.12)"></div>
<svg style="position:absolute;left:1219px;top:45px;" width="24" height="24" viewBox="0 0 24 24"><path d="M0 12H24M12 0V24M0 0" stroke="#2d3748" stroke-width="2.8" fill="none"/></svg>
<svg style="position:absolute;left:1271px;top:45px;" width="24" height="24" viewBox="0 0 24 24"><path d="M0 12H24" stroke="#2d3748" stroke-width="2.8" fill="none"/></svg>
<svg style="position:absolute;left:1323px;top:45px;" width="24" height="24" viewBox="0 0 24 24"><path d="M7.5 1.4H4.5a3 3 0 0 0-3 3v3M16.5 1.4h3a3 3 0 0 1 3 3v3M1.4 16.5v3a3 3 0 0 0 3 3h3M22.6 16.5v3a3 3 0 0 1-3 3h-3" stroke="#2d3748" stroke-width="2.8" fill="none"/></svg>
<div style="position:absolute;left:466.5px;top:1263px;width:458.5px;height:59.5px;background:#fff;border:2px solid #e5e7eb;border-radius:4px"></div>
<svg style="position:absolute;left:483.5px;top:1276.5px;" width="32" height="32" viewBox="0 0 24 24"><g fill="none" stroke="#3b82f6" stroke-width="2" stroke-linecap="round" stroke-linejoin="round"><path d="m8 2 1.88 1.88"/><path d="M14.12 3.88 16 2"/><path d="M9 7.13v-1a3.003 3.003 0 1 1 6 0v1"/><path d="M12 20c-3.3 0-6-2.7-6-6v-3a4 4 0 0 1 4-4h4a4 4 0 0 1 4 4v3c0 3.3-2.7 6-6 6"/><path d="M12 20v-9"/><path d="M6.53 9C4.6 8.8 3 7.1 3 5"/><path d="M6 13H2"/><path d="M3 21c0-2.1 1.7-3.9 3.8-4"/><path d="M20.97 5c0 2.1-1.6 3.8-3.5 4"/><path d="M22 13h-4"/><path d="M17.2 17c2.1.1 3.8 1.9 3.8 4"/></g></svg>
<div style="position:absolute;left:663px;top:1280.10px;font-family:'Liberation Sans', sans-serif;font-size:25.4px;line-height:25.4px;color:#2d3748;font-weight:400;white-space:nowrap;">deno</div>
<div style="position:absolute;left:866.5px;top:1271px;width:43.5px;height:43.5px;background:#fff;border:2px solid #d1d5db;border-radius:9px"></div>
<svg style="position:absolute;left:876.0px;top:1281.0px;" width="24" height="24" viewBox="0 0 24 24"><g fill="none" stroke="#2d3748" stroke-width="2" stroke-linecap="round" stroke-linejoin="round"><path d="M18 6 6 18"/><path d="m6 6 12 12"/></g></svg>
<div style="position:absolute;left:0px;top:1338.5px;width:1391px;height:3px;background:#e5e7eb"></div>
</div>
<div style="position:absolute;left:1522px;top:287.09px;font-family:'Liberation Sans', sans-serif;font-size:28.25px;line-height:28.25px;color:#2d3748;font-weight:700;white-space:nowrap;">Settings</div>
<div style="position:absolute;left:1522px;top:370.25px;font-family:'Liberation Sans', sans-serif;font-size:29px;line-height:29px;color:#4a5568;font-weight:400;white-space:nowrap;">Summary</div>
<div style="position:absolute;left:1522px;top:410px;width:1325px;height:66px;background:#f9fafb;border:2px solid #d1d5db;border-radius:10px"></div>
<div style="position:absolute;left:1540px;top:428.11px;font-family:'Liberation Sans', sans-serif;font-size:29.4px;line-height:29.4px;color:#2d3748;font-weight:400;white-space:nowrap;">Automatically Enrich CRM Contact Details from Simple Email</div>
<div style="position:absolute;left:1522px;top:550.87px;font-family:'Liberation Sans', sans-serif;font-size:28.5px;line-height:28.5px;color:#4a5568;font-weight:400;white-space:nowrap;">Path</div>
<div style="position:absolute;left:1521px;top:593px;width:278px;height:63.5px;background:#f3f4f6;border-radius:12px"></div>
<div style="position:absolute;left:1525px;top:597px;width:122px;height:56px;background:#fff;border-radius:10px;box-shadow:0 2px 5px rgba(0,0,0,0.12)"></div>
<svg style="position:absolute;left:1542.0px;top:611.0px;" width="26" height="26" viewBox="0 0 24 24"><g fill="none" stroke="#3b82f6" stroke-width="2" stroke-linecap="round" stroke-linejoin="round"><circle cx="12" cy="8" r="5"/><path d="M20 21a8 8 0 0 0-16 0"/></g></svg>
<div style="position:absolute;left:1578px;top:613.09px;font-family:'Liberation Sans', sans-serif;font-size:24.7px;line-height:24.7px;color:#2d3748;font-weight:400;white-space:nowrap;">User</div>
<svg style="position:absolute;left:1671.0px;top:610.0px;" width="28" height="28" viewBox="0 0 24 24"><g fill="none" stroke="#6b7280" stroke-width="1.8" stroke-linecap="round" stroke-linejoin="round"><path d="M20 20a2 2 0 0 0 2-2V8a2 2 0 0 0-2-2h-7.9a2 2 0 0 1-1.69-.9L9.6 3.9A2 2 0 0 0 7.93 3H4a2 2 0 0 0-2 2v13a2 2 0 0 0 2 2Z"/></g></svg>
<div style="position:absolute;left:1708px;top:612.75px;font-family:'Liberation Sans', sans-serif;font-size:25.1px;line-height:25.1px;color:#2d3748;font-weight:400;white-space:nowrap;">Folder</div>
<svg style="position:absolute;left:1826px;top:600px;" width="24" height="46" viewBox="0 0 24 46"><path d="M17.8 6 L8 41.5" stroke="#2d3748" stroke-width="3.5"/></svg>
<div style="position:absolute;left:1877px;top:589.5px;width:287.5px;height:67px;background:#f9fafb;border:2px solid #d1d5db;border-radius:10px"></div>
<div style="position:absolute;left:1897px;top:609.45px;font-family:'Liberation Sans', sans-serif;font-size:29px;line-height:29px;color:#2d3748;font-weight:400;white-space:nowrap;">henri</div>
<svg style="position:absolute;left:2192px;top:600px;" width="24" height="46" viewBox="0 0 24 46"><path d="M16.8 6 L7 41.5" stroke="#2d3748" stroke-width="3.5"/></svg>
<div style="position:absolute;left:2244px;top:589.5px;width:603px;height:67px;background:#f9fafb;border:2px solid #d1d5db;border-radius:10px"></div>
<div style="position:absolute;left:2261px;top:608.11px;font-family:'Liberation Sans', sans-serif;font-size:30px;line-height:30px;color:#2d3748;font-weight:400;white-space:nowrap;">powerful_flow</div>
<div style="position:absolute;left:1521.5px;top:690px;width:483px;height:46.5px;background:#f9fafb;border:2px solid #d1d5db;border-radius:10px"></div>
<div style="position:absolute;left:1523.5px;top:692px;width:137px;height:42.5px;background:#f3f4f6;border-radius:8px 0 0 8px;border-right:2px solid #d1d5db"></div>
<div style="position:absolute;left:1542px;top:701.28px;font-family:'Liberation Sans', sans-serif;font-size:23.3px;line-height:23.3px;color:#2d3748;font-weight:700;white-space:nowrap;">Full path</div>
<div style="position:absolute;left:1678px;top:700.68px;font-family:'Liberation Mono', monospace;font-size:24px;line-height:24px;color:#2d3748;font-weight:400;white-space:nowrap;">u/henri/powerful_flow</div>
<div style="position:absolute;left:1521.7px;top:821.69px;font-family:'Liberation Sans', sans-serif;font-size:29.9px;line-height:29.9px;color:#4a5568;font-weight:400;white-space:nowrap;">Description</div>
<div style="position:absolute;right:33px;top:833.55px;font-family:'Liberation Sans', sans-serif;font-size:21.8px;line-height:21.8px;color:#4a5568;font-weight:400;white-space:nowrap;">GH Markdown</div>
<div style="position:absolute;left:1522px;top:860.7px;width:1324px;height:114.3px;background:#f9fafb;border:2px solid #d1d5db;border-radius:10px"></div>
<div style="position:absolute;left:1539.6px;top:879.29px;font-family:'Liberation Sans', sans-serif;font-size:29.9px;line-height:29.9px;color:#2d3748;font-weight:400;white-space:nowrap;">Populate your CRM contacts' details from only emails. Note: this Workflow works with a table</div>
<div style="position:absolute;left:1539.6px;top:926.99px;font-family:'Liberation Sans', sans-serif;font-size:29.9px;line-height:29.9px;color:#2d3748;font-weight:400;white-space:nowrap;">that has specific columns names, customize them to your needs. For this example it would work</div>
<div style="position:absolute;left:2836px;top:863px;width:10px;height:54px;background:#9ca3af;border-radius:5px"></div>
<div style="position:absolute;left:2834px;top:964px;width:11px;height:10px;background:#fff;border-left:1px solid #e5e7eb;border-top:1px solid #e5e7eb"></div>
<svg style="position:absolute;left:2838px;top:967px;" width="6" height="6" viewBox="0 0 6 6"><path d="M5.5 1.5 L1.5 5.5 M5.5 3.5 L3.5 5.5" stroke="#555" stroke-width="1"/></svg>
<svg style="position:absolute;left:1523.5px;top:1047.0px;" width="26" height="26" viewBox="0 0 24 24"><g fill="none" stroke="#2d3748" stroke-width="2.4" stroke-linecap="round" stroke-linejoin="round"><path d="m9 18 6-6-6-6"/></g></svg>
<div style="position:absolute;left:1562px;top:1045.64px;font-family:'Liberation Sans', sans-serif;font-size:28.3px;line-height:28.3px;color:#2d3748;font-weight:700;white-space:nowrap;">Advanced</div>
</body></html>
